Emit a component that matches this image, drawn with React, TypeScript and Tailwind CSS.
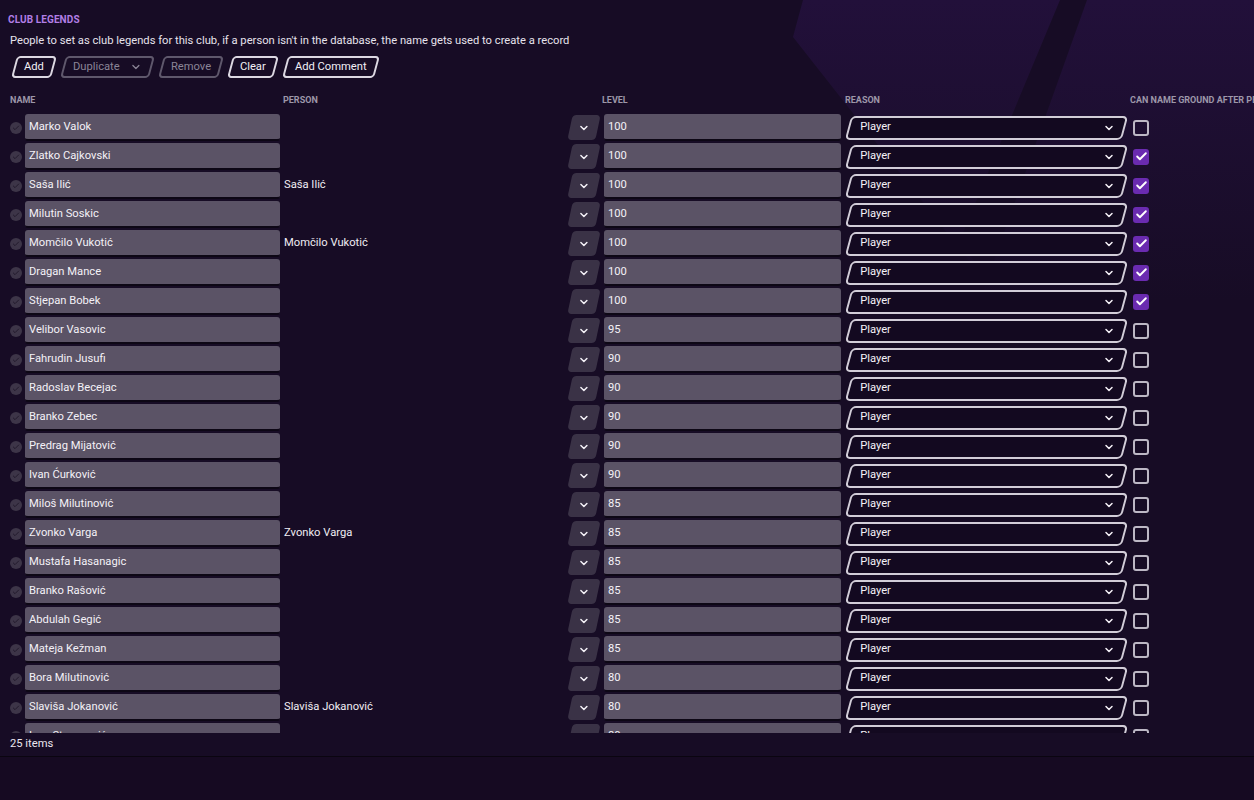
import { ChevronDown, Check } from "lucide-react";

type Legend = { name: string; person?: string; level: number; can: boolean };

const legends: Legend[] = [
  { name: "Marko Valok", level: 100, can: false },
  { name: "Zlatko Cajkovski", level: 100, can: true },
  { name: "Saša Ilić", person: "Saša Ilić", level: 100, can: true },
  { name: "Milutin Soskic", level: 100, can: true },
  { name: "Momčilo Vukotić", person: "Momčilo Vukotić", level: 100, can: true },
  { name: "Dragan Mance", level: 100, can: true },
  { name: "Stjepan Bobek", level: 100, can: true },
  { name: "Velibor Vasovic", level: 95, can: false },
  { name: "Fahrudin Jusufi", level: 90, can: false },
  { name: "Radoslav Becejac", level: 90, can: false },
  { name: "Branko Zebec", level: 90, can: false },
  { name: "Predrag Mijatović", level: 90, can: false },
  { name: "Ivan Ćurković", level: 90, can: false },
  { name: "Miloš Milutinović", level: 85, can: false },
  { name: "Zvonko Varga", person: "Zvonko Varga", level: 85, can: false },
  { name: "Mustafa Hasanagic", level: 85, can: false },
  { name: "Branko Rašović", level: 85, can: false },
  { name: "Abdulah Gegić", level: 85, can: false },
  { name: "Mateja Kežman", level: 85, can: false },
  { name: "Bora Milutinović", level: 80, can: false },
  { name: "Slaviša Jokanović", person: "Slaviša Jokanović", level: 80, can: false },
  { name: "Ivan Stevanović", level: 80, can: false },
  { name: "Jovan Miladinović", level: 80, can: false },
];

function ToolButton({ label, disabled, menu }: { label: string; disabled?: boolean; menu?: boolean }) {
  return (
    <button
      className={`h-[22px] px-[8px] -skew-x-[15deg] rounded-[4px] border-2 ${
        disabled ? "border-[#5f586c] text-[#8a8496]" : "border-[#dcd8e2] text-[#f2eff5]"
      }`}
    >
      <span className="skew-x-[15deg] flex items-center gap-[10px]">
        {label}
        {menu && <ChevronDown size={12} strokeWidth={2.5} />}
      </span>
    </button>
  );
}

function Row({ item }: { item: Legend }) {
  return (
    <div className="flex items-center h-[29px] shrink-0">
      <div className="w-[12px] h-[12px] ml-[10px] rounded-full bg-[#3d3548] flex items-center justify-center">
        <Check size={8} strokeWidth={3} className="text-[#221a2c]" />
      </div>
      <div className="ml-[3px] w-[255px] h-[27px] rounded-[3px] bg-[#5b5366] border-b-2 border-[#0d0715] flex items-center pl-[4px] pt-[1px] text-[#f4f1f7]">
        {item.name}
      </div>
      <div className="ml-[4px] w-[284px] text-[#f0edf3]">{item.person ?? ""}</div>
      <div className="w-[28px] h-[25px] ml-[2px] -skew-x-[12deg] rounded-[4px] bg-[#3a3246] flex items-center justify-center">
        <ChevronDown size={12} strokeWidth={3} className="text-[#f4f1f7] skew-x-[12deg]" />
      </div>
      <div className="ml-[6px] w-[237px] h-[27px] rounded-[3px] bg-[#5b5366] border-b-2 border-[#0d0715] flex items-center pl-[4px] pt-[1px] text-[#f4f1f7]">
        {item.level}
      </div>
      <div className="ml-[7px] w-[277px] h-[24px] -skew-x-[15deg] rounded-[5px] border-2 border-[#d2cdd8] bg-[#130920] flex items-center justify-between pl-[10px] pr-[8px]">
        <span className="skew-x-[15deg] text-[#f4f1f7] -mt-[2px]">Player</span>
        <ChevronDown size={12} strokeWidth={3} className="skew-x-[15deg] text-[#f4f1f7]" />
      </div>
      <div className="ml-[8px]">
        {item.can ? (
          <div className="w-[16px] h-[16px] rounded-[3px] bg-[#6a2bb0] flex items-center justify-center">
            <Check size={13} strokeWidth={3.5} className="text-white" />
          </div>
        ) : (
          <div className="w-[16px] h-[16px] rounded-[3px] border-2 border-[#bdb8c5]" />
        )}
      </div>
    </div>
  );
}

export default function App() {
  return (
    <div
      className="relative w-[1254px] h-[800px] overflow-hidden bg-[#170c25] text-[11.2px]"
      style={{ fontFamily: "Roboto, 'Liberation Sans', sans-serif" }}
    >
      <svg className="absolute inset-0 pointer-events-none" width="1254" height="800">
        <defs>
          <linearGradient id="fade" x1="0" y1="0" x2="0" y2="1">
            <stop offset="0" stopColor="#22103a" stopOpacity="1" />
            <stop offset="1" stopColor="#22103a" stopOpacity="0" />
          </linearGradient>
        </defs>
        <polygon points="803,0 1060,0 960,240 1000,300 793,37" fill="url(#fade)" />
        <polygon points="1087,0 1254,0 1254,300 980,300" fill="url(#fade)" />
      </svg>

      <div className="relative flex flex-col h-full">
        <div className="pl-[8px] pt-[14px] text-[10px] leading-[12px] font-bold text-[#b27ee6] tracking-[0.01em]">CLUB LEGENDS</div>
        <div className="pl-[10px] mt-[7px] leading-[15px] text-[#e6e2ec]">
          People to set as club legends for this club, if a person isn't in the database, the name gets used to create a record
        </div>
        <div className="flex gap-[9px] pl-[14px] mt-[8px]">
          <ToolButton label="Add" />
          <ToolButton label="Duplicate" disabled menu />
          <ToolButton label="Remove" disabled />
          <ToolButton label="Clear" />
          <ToolButton label="Add Comment" />
        </div>

        <div className="flex mt-[17px] h-[12px] items-center text-[9px] font-bold text-[#9d97a9] whitespace-nowrap">
          <div className="pl-[10px] w-[283px] shrink-0">NAME</div>
          <div className="w-[319px] shrink-0">PERSON</div>
          <div className="w-[243px] shrink-0">LEVEL</div>
          <div className="w-[285px] shrink-0">REASON</div>
          <div className="shrink-0">CAN NAME GROUND AFTER PERSON</div>
        </div>

        <div className="mt-[6px] h-[620px] overflow-hidden flex flex-col">
          {legends.map((l) => (
            <Row key={l.name} item={l} />
          ))}
        </div>

        <div className="h-[24px] border-b border-[#0a0510] pl-[10px] flex items-center text-[#eae6ef]">25 items</div>
        <div className="flex-1 bg-[#160a22]" />
      </div>
    </div>
  );
}
